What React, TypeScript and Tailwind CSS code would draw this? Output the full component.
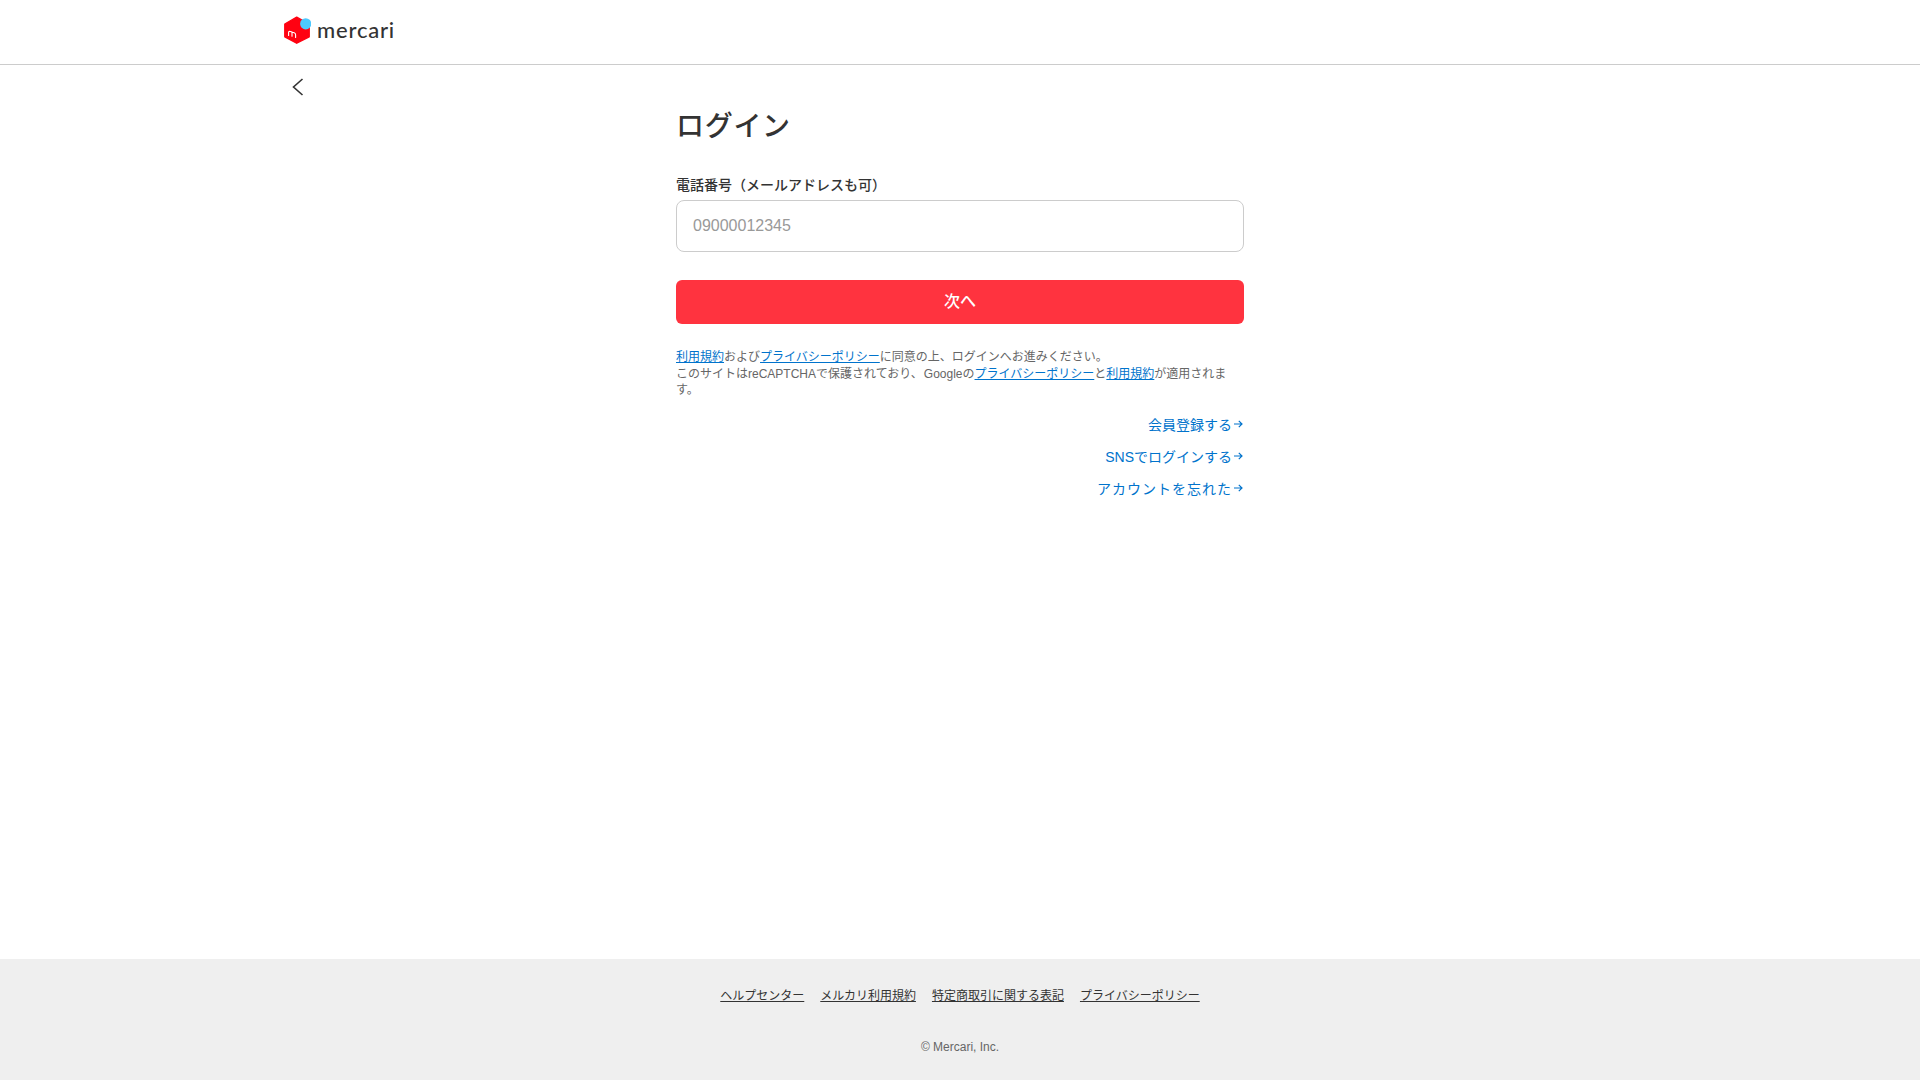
const font = { fontFamily: '"Liberation Sans", "Noto Sans CJK JP", sans-serif' };

function Arrow() {
  return (
    <svg width="12" height="10" viewBox="0 0 12 10" fill="none" stroke="currentColor" strokeWidth="1.2" className="mb-[3px] shrink-0">
      <path d="M2 5H10M6.8 1.8L10 5L6.8 8.2" />
    </svg>
  );
}

function Logo() {
  return (
    <div className="flex items-center">
      <svg width="27" height="28" viewBox="0 0 27 28" className="shrink-0">
        <path d="M12.7 1.2L25.2 8V20.8L12.7 27.2L0.8 20.8V8Z" fill="#ff0211" stroke="#ff0211" strokeWidth="1.4" strokeLinejoin="round" />
        <circle cx="21.7" cy="7.8" r="5.6" fill="#4dc9ff" />
        <path d="M4.6 19.5V16.6C4.6 15.6 5.4 15.2 6.3 15.5L10.2 16.8C11.2 17.2 11.6 17.8 11.6 18.8V21.5M8 15.9V20.2" fill="none" stroke="#fff" strokeWidth="1.1" strokeLinecap="round" />
      </svg>
      <span className="ml-[6px] text-[22px] font-medium leading-none tracking-[0.8px] text-[#333]" style={{ fontFamily: 'Lato, sans-serif' }}>mercari</span>
    </div>
  );
}

function Side({ children, wide }: { children: React.ReactNode; wide?: boolean }) {
  return (
    <a className="flex items-center justify-end h-[32px] text-[14px] text-[#0073cc]">
      <span className={wide ? 'tracking-[1px]' : ''}>{children}</span>
      <Arrow />
    </a>
  );
}

function L({ children }: { children: React.ReactNode }) {
  return <a className="text-[#0073cc] underline">{children}</a>;
}

export default function App() {
  return (
    <div className="flex min-h-[1080px] flex-col bg-white text-[#333]" style={font}>
      <header className="h-[65px] border-b border-[#cccccc]">
        <div className="mx-auto flex h-[60px] w-[1352px] items-center"><Logo /></div>
      </header>
      <main className="flex-1">
        <div className="mx-auto w-[1352px] h-[41px] pt-[13px] pl-[8px]">
          <svg width="12" height="18" viewBox="0 0 12 18" fill="none" stroke="#333" strokeWidth="1.6">
            <path d="M10.5 1L1.5 9L10.5 17" />
          </svg>
        </div>
        <div className="mx-auto w-[568px]">
          <h1 className="text-[28px] leading-[42px] font-medium tracking-[0.7px] text-[#333]">ログイン</h1>
          <label className="mt-[27px] block text-[14px] font-medium leading-[21px]">電話番号（メールアドレスも可）</label>
          <input
            placeholder="09000012345"
            className="mt-[4px] block h-[52px] w-full rounded-[8px] border border-[#cccccc] px-4 text-[16px] placeholder:text-[#999999] outline-none"
          />
          <button className="mt-[28px] block h-[44px] w-full rounded-[6px] bg-[#ff333f] text-[16px] font-medium text-white">次へ</button>
          <p className="mt-[25px] text-[12px] leading-[16.5px] text-[#666666]">
            <L>利用規約</L>および<L>プライバシーポリシー</L>に同意の上、ログインへお進みください。<br />
            このサイトはreCAPTCHAで保護されており、<span className="pl-[1px]">Google</span>の<L>プライバシーポリシー</L>と<L>利用規約</L>が適用されます。
          </p>
          <div className="mt-[11px]">
            <Side>会員登録する</Side>
            <Side>SNSでログインする</Side>
            <Side wide>アカウントを忘れた</Side>
          </div>
        </div>
      </main>
      <footer className="h-[121px] bg-[#efefef] pt-[28px] text-center text-[12px]">
        <div className="flex justify-center gap-4 leading-[18px]">
          <a className="underline text-[#333]">ヘルプセンター</a>
          <a className="underline text-[#333]">メルカリ利用規約</a>
          <a className="underline text-[#333]">特定商取引に関する表記</a>
          <a className="underline text-[#333]">プライバシーポリシー</a>
        </div>
        <p className="mt-[33px] leading-[18px] text-[#666666]">© Mercari, Inc.</p>
      </footer>
    </div>
  );
}
